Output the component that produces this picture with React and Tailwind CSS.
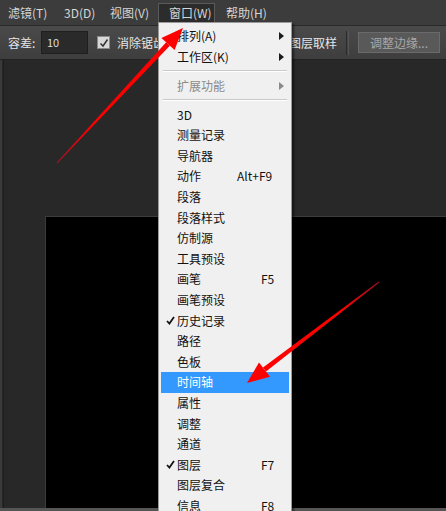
import React from 'react';

const FONT = "font-['Noto_Sans_CJK_SC','Noto_Sans',sans-serif]";

const topMenus = [
  { label: '滤镜(T)', cls: 'w-[56px] pl-2' },
  { label: '3D(D)', cls: 'w-[46px] pl-2' },
  { label: '视图(V)', cls: 'w-[56px] pl-2' },
  { label: '窗口(W)', cls: 'w-[57px] pl-[10px] bg-[#2c2c2c] border border-[#5a5a5a]', active: true },
  { label: '帮助(H)', cls: 'pl-[11px]' },
];

const panelItems = [
  { label: '3D' },
  { label: '测量记录' },
  { label: '导航器' },
  { label: '动作', key: 'Alt+F9' },
  { label: '段落' },
  { label: '段落样式' },
  { label: '仿制源' },
  { label: '工具预设' },
  { label: '画笔', key: 'F5' },
  { label: '画笔预设' },
  { label: '历史记录', checked: true },
  { label: '路径' },
  { label: '色板' },
  { label: '时间轴', active: true },
  { label: '属性' },
  { label: '调整' },
  { label: '通道' },
  { label: '图层', checked: true, key: 'F7' },
  { label: '图层复合' },
  { label: '信息', key: 'F8' },
];

function SubArrow({ gray }) {
  return (
    <svg width="5" height="8" viewBox="0 0 5 8" className="absolute left-[118px]">
      <path d="M0 0 L5 4 L0 8 Z" fill={gray ? '#8a8a8a' : '#1a1a1a'} />
    </svg>
  );
}

function Check() {
  return (
    <svg width="9" height="9" viewBox="0 0 9 9" className="absolute left-[5px]">
      <path d="M1 5 L3.4 7.6 L8 1" fill="none" stroke="#111" strokeWidth="1.7" />
    </svg>
  );
}

function MenuRow({ item }) {
  return (
    <div
      className={`relative flex items-center h-[20.6px] mx-[2px] pl-[16px] text-[12px] ${
        item.active ? 'bg-[#3399ff] text-white' : 'text-[#111]'
      }`}
    >
      {item.checked && <Check />}
      <span>{item.label}</span>
      {item.key && (
        <span className={`absolute ${item.key === 'Alt+F9' ? 'left-[76px]' : 'left-[100px]'}`}>{item.key}</span>
      )}
    </div>
  );
}

function Separator() {
  return (
    <div className="h-[8.4px] flex items-center mx-[4px]">
      <div className="w-full h-[2px] border-t border-[#c9c9c9] border-b border-b-white" />
    </div>
  );
}

export default function App() {
  return (
    <div className={`relative w-[446px] h-[511px] overflow-hidden bg-[#282828] flex flex-col ${FONT}`}>
      {/* menu bar */}
      <div className="h-[26px] flex items-center bg-[#3c3c3c] text-[12px] text-[#d6d6d6] border-b border-[#2a2a2a]">
        {topMenus.map((m) => (
          <div key={m.label} className={`h-[20px] flex items-center ${m.cls}`}>
            {m.label}
          </div>
        ))}
      </div>

      {/* options bar */}
      <div className="h-[34px] flex items-center pl-2 bg-gradient-to-b from-[#4a4a4a] to-[#3e3e3e] text-[12px] text-[#e6e6e6] border-b border-[#222]">
        <span className="w-[33px]">容差:</span>
        <div className="w-[47px] h-[23px] flex items-center pl-[5px] bg-[#2a2a2a] border border-[#1f1f1f] text-[11px] text-[#dcdcdc]">
          10
        </div>
        <div className="ml-[9px] w-[13px] h-[13px] bg-[#d8d8d8] border border-[#8a8a8a] flex items-center justify-center">
          <svg width="10" height="10" viewBox="0 0 10 10">
            <path d="M1.5 5.5 L4 8 L8.5 1.5" fill="none" stroke="#333" strokeWidth="1.5" />
          </svg>
        </div>
        <span className="ml-[7px] w-[172px]">消除锯齿</span>
        <span className="w-[57px]">图层取样</span>
        <div className="w-[3px] h-[24px] border-l border-[#2c2c2c] border-r border-r-[#555]" />
        <div className="ml-[9px] w-[82px] h-[21px] flex items-center justify-center bg-[#595959] border border-[#6a6a6a] text-[#a8a8a8] text-[12px]">
          调整边缘...
        </div>
      </div>

      {/* work area */}
      <div className="flex-1 flex">
        <div className="w-[4px] border-l-2 border-[#3a3a3a] border-r border-r-[#1e1e1e]" />
        <div className="flex-1 flex flex-col pt-[156px] pl-[41px]">
          <div className="flex-1 bg-black border-t border-l border-[#3c3c3c]" />
        </div>
      </div>
      <div className="h-[3px] bg-[#555]" />

      {/* window dropdown */}
      <div className="absolute left-[158px] top-[22px] w-[134px] h-[500px] bg-[#f0f0f0] border border-[#9a9a9a] shadow-[2px_2px_2px_rgba(0,0,0,0.5)] pt-[2px]">
        <div className="relative flex items-center h-[21px] mx-[2px] pl-[16px] text-[12px] text-[#111]">
          排列(A)
          <SubArrow />
        </div>
        <div className="relative flex items-center h-[21px] mx-[2px] pl-[16px] text-[12px] text-[#111]">
          工作区(K)
          <SubArrow />
        </div>
        <Separator />
        <div className="relative flex items-center h-[20.6px] mx-[2px] pl-[16px] text-[12px] text-[#8a8a8a]">
          扩展功能
          <SubArrow gray />
        </div>
        <Separator />
        {panelItems.map((it) => (
          <MenuRow key={it.label} item={it} />
        ))}
      </div>

      {/* red annotation arrows */}
      <svg className="absolute inset-0 pointer-events-none" width="446" height="511" viewBox="0 0 446 511">
        <defs>
          <linearGradient id="a1" x1="57" y1="163" x2="183" y2="28" gradientUnits="userSpaceOnUse">
            <stop offset="0" stopColor="#b01020" />
            <stop offset="0.3" stopColor="#ff0000" />
          </linearGradient>
          <linearGradient id="a2" x1="379" y1="282" x2="247" y2="383" gradientUnits="userSpaceOnUse">
            <stop offset="0" stopColor="#a01020" />
            <stop offset="0.3" stopColor="#ff0000" />
          </linearGradient>
        </defs>
        <polygon points="57.4,163.3 56.6,162.7 166.2,42.3 169.8,45.7" fill="url(#a1)" />
        <polygon points="183,28 161.4,37.9 174.6,50.1" fill="#ff0000" />
        <polygon points="379.3,282.4 378.7,281.6 263,367.6 266,371.6" fill="url(#a2)" />
        <polygon points="247,383 259,362.4 270,376.8" fill="#ff0000" />
      </svg>
    </div>
  );
}
